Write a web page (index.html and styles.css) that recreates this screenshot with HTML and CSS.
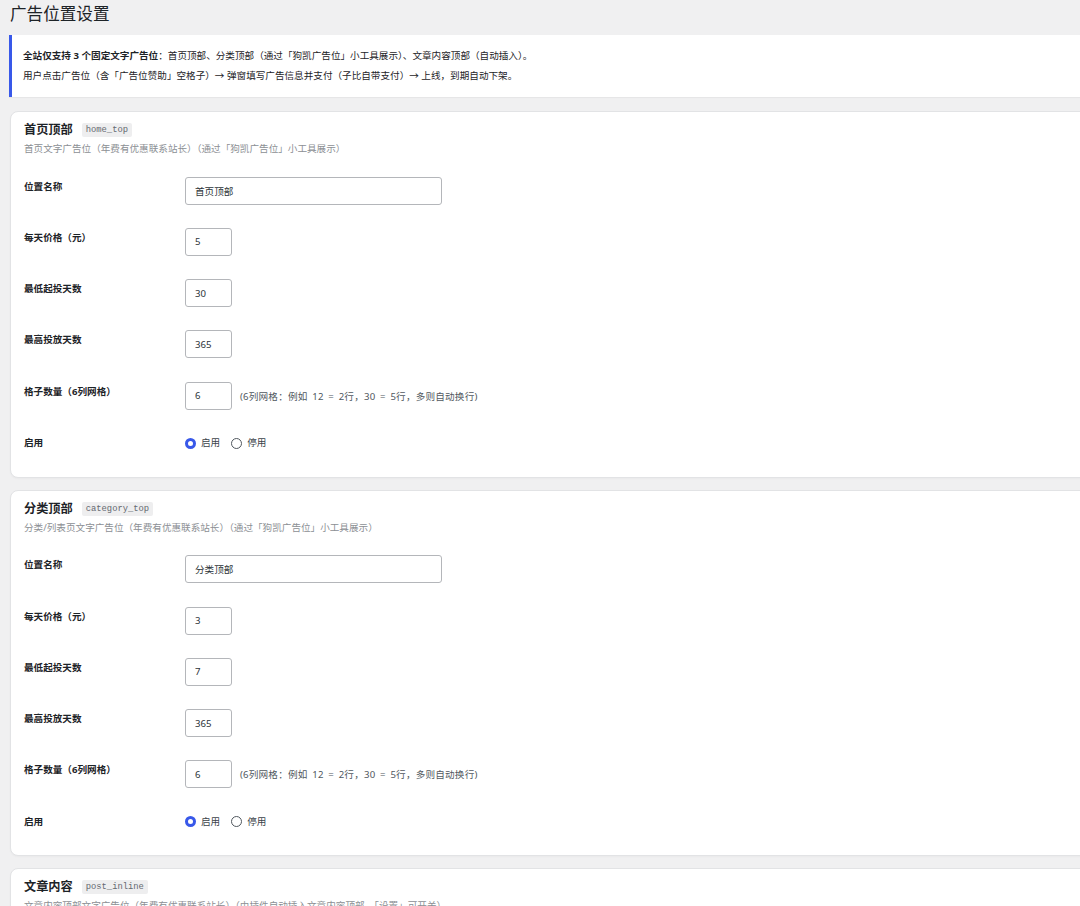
FILE: index.html
```html
<!DOCTYPE html>
<html lang="zh">
<head>
    <meta charset="UTF-8">
    <meta name="viewport" content="width=device-width, initial-scale=1.0">
    <title>广告位置设置</title>
    <link rel="stylesheet" href="styles.css">
</head>
<body>
    <div class="wrap">
        <h1>广告位置设置</h1>

        <div class="notice">
            <p><strong>全站仅支持 3 个固定文字广告位</strong>：首页顶部、分类顶部（通过「狗凯广告位」小工具展示）、文章内容顶部（自动插入）。</p>
            <p>用户点击广告位（含「广告位赞助」空格子）→ 弹窗填写广告信息并支付（子比自带支付）→ 上线，到期自动下架。</p>
        </div>

        <form method="post">
            <!-- 首页顶部 -->
            <div class="slot-card">
                <div class="slot-head">
                    <h2>首页顶部</h2>
                    <code>home_top</code>
                </div>
                <p class="slot-desc">首页文字广告位（年费有优惠联系站长）（通过「狗凯广告位」小工具展示）</p>
                <div class="form-row">
                    <label for="home_top_name">位置名称</label>
                    <div class="field"><input type="text" id="home_top_name" class="regular-text" value="首页顶部"></div>
                </div>
                <div class="form-row">
                    <label for="home_top_price">每天价格（元）</label>
                    <div class="field"><input type="number" id="home_top_price" class="small-text" value="5"></div>
                </div>
                <div class="form-row">
                    <label for="home_top_min">最低起投天数</label>
                    <div class="field"><input type="number" id="home_top_min" class="small-text" value="30"></div>
                </div>
                <div class="form-row">
                    <label for="home_top_max">最高投放天数</label>
                    <div class="field"><input type="number" id="home_top_max" class="small-text" value="365"></div>
                </div>
                <div class="form-row">
                    <label for="home_top_cells">格子数量（6列网格）</label>
                    <div class="field">
                        <input type="number" id="home_top_cells" class="small-text" value="6">
                        <span class="hint">(6列网格：例如 12 = 2行，30 = 5行，多则自动换行)</span>
                    </div>
                </div>
                <div class="form-row">
                    <label>启用</label>
                    <div class="field radios">
                        <label class="radio"><input type="radio" name="home_top_on" checked> 启用</label>
                        <label class="radio"><input type="radio" name="home_top_on"> 停用</label>
                    </div>
                </div>
            </div>

            <!-- 分类顶部 -->
            <div class="slot-card">
                <div class="slot-head">
                    <h2>分类顶部</h2>
                    <code>category_top</code>
                </div>
                <p class="slot-desc">分类/列表页文字广告位（年费有优惠联系站长）（通过「狗凯广告位」小工具展示）</p>
                <div class="form-row">
                    <label for="category_top_name">位置名称</label>
                    <div class="field"><input type="text" id="category_top_name" class="regular-text" value="分类顶部"></div>
                </div>
                <div class="form-row">
                    <label for="category_top_price">每天价格（元）</label>
                    <div class="field"><input type="number" id="category_top_price" class="small-text" value="3"></div>
                </div>
                <div class="form-row">
                    <label for="category_top_min">最低起投天数</label>
                    <div class="field"><input type="number" id="category_top_min" class="small-text" value="7"></div>
                </div>
                <div class="form-row">
                    <label for="category_top_max">最高投放天数</label>
                    <div class="field"><input type="number" id="category_top_max" class="small-text" value="365"></div>
                </div>
                <div class="form-row">
                    <label for="category_top_cells">格子数量（6列网格）</label>
                    <div class="field">
                        <input type="number" id="category_top_cells" class="small-text" value="6">
                        <span class="hint">(6列网格：例如 12 = 2行，30 = 5行，多则自动换行)</span>
                    </div>
                </div>
                <div class="form-row">
                    <label>启用</label>
                    <div class="field radios">
                        <label class="radio"><input type="radio" name="category_top_on" checked> 启用</label>
                        <label class="radio"><input type="radio" name="category_top_on"> 停用</label>
                    </div>
                </div>
            </div>

            <!-- 文章内容 -->
            <div class="slot-card">
                <div class="slot-head">
                    <h2>文章内容</h2>
                    <code>post_inline</code>
                </div>
                <p class="slot-desc">文章内容顶部文字广告位（年费有优惠联系站长）（由插件自动插入文章内容顶部，「设置」可开关）</p>
                <div class="form-row">
                    <label for="post_inline_name">位置名称</label>
                    <div class="field"><input type="text" id="post_inline_name" class="regular-text" value="文章内容"></div>
                </div>
                <div class="form-row">
                    <label for="post_inline_price">每天价格（元）</label>
                    <div class="field"><input type="number" id="post_inline_price" class="small-text" value="3"></div>
                </div>
            </div>
        </form>
    </div>
</body>
</html>
```

FILE: styles.css
```css
html {
    overflow-x: hidden;
}
body {
    margin: 0;
    background-color: #f0f0f1;
    color: #1d2327;
    font-family: "Noto Sans", "Noto Sans CJK SC", sans-serif;
    font-size: 9.6px;
}
.wrap {
    margin: 0 -24px 0 10px;
}
h1 {
    margin: 3px 0 10px;
    font-size: 16.6px;
    font-weight: 400;
    line-height: 22px;
    color: #1d2327;
}

/* 顶部说明 */
.notice {
    margin: 0 0 14px -1px;
    padding: 11px 12px 11px 11px;
    background-color: #fff;
    border-left: 3px solid #3858e9;
    box-shadow: 0 1px 1px rgba(0,0,0,0.04);
}
.notice p {
    margin: 0;
    line-height: 20px;
}
.notice strong {
    font-weight: 700;
}

/* 广告位卡片 */
.slot-card {
    background-color: #fff;
    border: 1px solid #e2e3e5;
    border-radius: 8px;
    padding: 9px 13px 4px;
    margin-bottom: 12px;
    box-shadow: 0 1px 2px rgba(0,0,0,0.03);
}
.slot-head {
    display: flex;
    align-items: center;
    gap: 9px;
    height: 18px;
}
.slot-head h2 {
    margin: 0;
    font-size: 12.2px;
    font-weight: 700;
    line-height: 18px;
}
.slot-head code {
    background-color: #eeeeef;
    color: #646970;
    font-family: "Liberation Mono", "DejaVu Sans Mono", monospace;
    font-size: 8.8px;
    line-height: 14px;
    padding: 0 4px;
    border-radius: 2px;
}
.slot-desc {
    margin: 1px 0 7px;
    color: #8c8f94;
    line-height: 18px;
}

.form-row {
    display: grid;
    grid-template-columns: 161px 1fr;
    padding: 11.65px 0;
}
.form-row > label {
    font-weight: 700;
    line-height: 20px;
}
.field {
    display: flex;
    align-items: center;
    gap: 8px;
    min-height: 28px;
}
.field.radios {
    align-items: flex-start;
    gap: 11px;
}

input[type="text"],
input[type="number"] {
    box-sizing: border-box;
    height: 28px;
    margin: 0;
    padding: 0 9px;
    border: 1px solid #b4b6ba;
    border-radius: 3px;
    background-color: #fff;
    color: #2c3338;
    font-family: inherit;
    font-size: 9.6px;
    -moz-appearance: textfield;
}
input[type="number"]::-webkit-inner-spin-button,
input[type="number"]::-webkit-outer-spin-button {
    -webkit-appearance: none;
    margin: 0;
}
.regular-text {
    width: 257px;
}
.small-text {
    width: 47px;
}
.hint {
    color: #50575e;
    word-spacing: 2px;
    letter-spacing: 0.2px;
}

.radio {
    display: flex;
    align-items: center;
    gap: 5px;
    line-height: 20px;
    color: #3c434a;
}
input[type="radio"] {
    -webkit-appearance: none;
    appearance: none;
    box-sizing: border-box;
    width: 11px;
    height: 11px;
    margin: 0;
    border: 1px solid #50575e;
    border-radius: 50%;
    background-color: #fff;
}
input[type="radio"]:checked {
    border: 3.5px solid #3858e9;
}
```
